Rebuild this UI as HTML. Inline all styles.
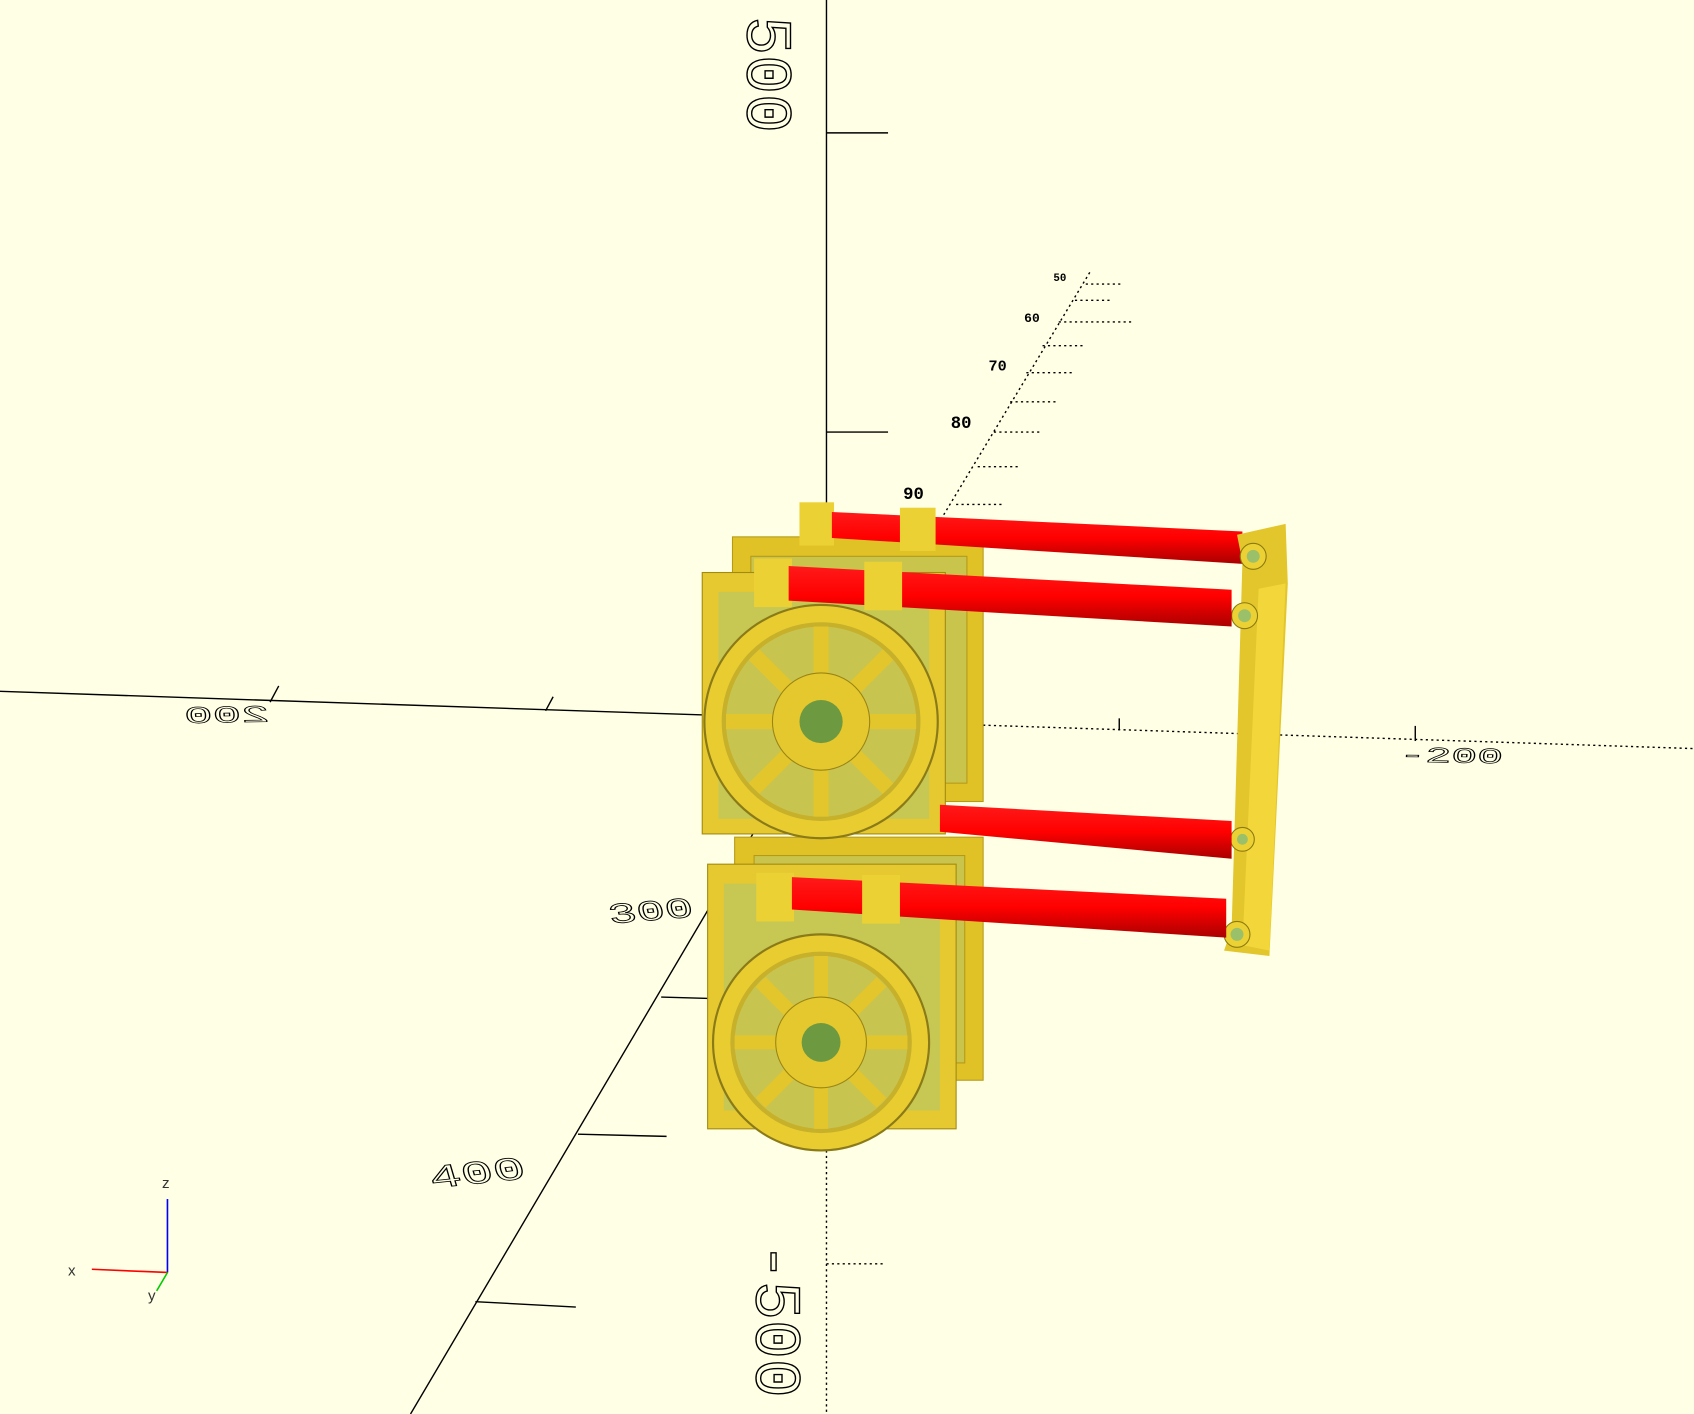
<!DOCTYPE html>
<html><head><meta charset="utf-8"><style>
html,body{margin:0;padding:0;background:#ffffe5;width:1694px;height:1414px;overflow:hidden}
svg{display:block}
</style></head><body>
<svg width="1694" height="1414" viewBox="0 0 1568 1309" preserveAspectRatio="none" xmlns="http://www.w3.org/2000/svg">
<defs>
<linearGradient id="rod" x1="0" y1="0" x2="0" y2="1">
<stop offset="0" stop-color="#ff1a1a"/><stop offset="0.5" stop-color="#f00"/><stop offset="1" stop-color="#a00"/>
</linearGradient>
</defs>
<rect width="1568" height="1309" fill="#ffffe5"/>
<g stroke="#000" fill="none" stroke-width="1.3">
<line x1="765" y1="0" x2="765" y2="525"/>
<line x1="765" y1="1060" x2="765" y2="1309" stroke-dasharray="2,3"/>
<line x1="0" y1="640" x2="655" y2="662"/>
<line x1="870" y1="670" x2="1568" y2="693" stroke-dasharray="2,3"/>
<line x1="380" y1="1309" x2="760" y2="665"/>
<line x1="760" y1="665" x2="1010" y2="250" stroke-dasharray="2,3"/>
<line x1="765" y1="123" x2="822" y2="123"/>
<line x1="765" y1="400" x2="822" y2="400"/>
<line x1="765" y1="1170" x2="820" y2="1170" stroke-dasharray="2,3"/>
<line x1="535" y1="1050" x2="617" y2="1052"/>
<line x1="440" y1="1205" x2="533" y2="1210"/>
<line x1="612" y1="923" x2="680" y2="925"/>
<line x1="885" y1="467" x2="928" y2="467" stroke-dasharray="2,3"/>
<line x1="905" y1="432" x2="945" y2="432" stroke-dasharray="2,3"/>
<line x1="920" y1="400" x2="963" y2="400" stroke-dasharray="2,3"/>
<line x1="935" y1="372" x2="978" y2="372" stroke-dasharray="2,3"/>
<line x1="950" y1="345" x2="992" y2="345" stroke-dasharray="2,3"/>
<line x1="965" y1="320" x2="1005" y2="320" stroke-dasharray="2,3"/>
<line x1="980" y1="298" x2="1050" y2="298" stroke-dasharray="2,3"/>
<line x1="995" y1="278" x2="1030" y2="278" stroke-dasharray="2,3"/>
<line x1="1005" y1="263" x2="1037" y2="263" stroke-dasharray="2,3"/>
<line x1="258" y1="635" x2="250" y2="650"/>
<line x1="512" y1="645" x2="505" y2="658"/>
<line x1="1036" y1="665" x2="1036" y2="676"/>
<line x1="1310" y1="672" x2="1310" y2="686"/>
</g>
<g font-family="Liberation Mono, monospace" fill="none" stroke="#000" stroke-width="1.3">
<text x="0" y="0" font-size="60" transform="translate(692,15) rotate(90)">500</text>
<text x="0" y="0" font-size="60" transform="translate(700,1150) rotate(90)">-500</text>
<text x="0" y="0" font-size="44" transform="translate(250,668) scale(-1,0.5) rotate(2)">200</text>
<text x="0" y="0" font-size="40" transform="translate(1295,705) scale(1,0.5) rotate(2)">-200</text>
<text x="0" y="0" font-size="44" transform="translate(565,855) scale(1,0.6) rotate(-8)">300</text>
<text x="0" y="0" font-size="50" transform="translate(400,1100) scale(1,0.6) rotate(-10)">400</text>
</g>
<g font-family="Liberation Mono, monospace" font-size="18" fill="#000" font-weight="bold">
<text x="836" y="462" font-size="16">90</text>
<text x="880" y="396" font-size="16">80</text>
<text x="915" y="343" font-size="14">70</text>
<text x="948" y="298" font-size="12">60</text>
<text x="975" y="260" font-size="10">50</text>
</g>
<g stroke="#b59a18" stroke-width="1">
<rect x="678" y="497" width="232" height="245" fill="#e0c227"/>
<rect x="695" y="515" width="200" height="210" fill="#c9c44c"/>
<rect x="680" y="775" width="230" height="225" fill="#e0c227"/>
<rect x="698" y="792" width="195" height="192" fill="#c9c44c"/>
</g>
<rect x="740" y="465" width="32" height="40" fill="#ecd135"/>
<polygon points="770,474 1150,492 1150,522 770,498" fill="url(#rod)"/>
<rect x="833" y="470" width="33" height="40" fill="#ecd135"/>
<polygon points="1145,495 1190,485 1192,540 1175,885 1133,880 1140,860 1150,520" fill="#e3c52c"/>
<polygon points="1165,545 1190,540 1175,880 1150,875" fill="#f2d63a"/>
<circle cx="1160" cy="515" r="12" fill="#ecd135" stroke="#8a7a10"/><circle cx="1160" cy="515" r="6" fill="#9bc06a"/>
<circle cx="1152" cy="570" r="12" fill="#ecd135" stroke="#8a7a10"/><circle cx="1152" cy="570" r="6" fill="#9bc06a"/>
<circle cx="1150" cy="777" r="11" fill="#ecd135" stroke="#8a7a10"/><circle cx="1150" cy="777" r="5" fill="#9bc06a"/>
<circle cx="1145" cy="865" r="12" fill="#ecd135" stroke="#8a7a10"/><circle cx="1145" cy="865" r="6" fill="#9bc06a"/>
<rect x="650" y="530" width="225" height="242" fill="#e6c830" stroke="#a08a10"/>
<rect x="665" y="548" width="195" height="210" fill="#c6c853"/>
<polygon points="870,745 1140,760 1140,795 870,770" fill="url(#rod)"/>
<rect x="698" y="517" width="35" height="45" fill="#ecd135"/>
<polygon points="730,524 1140,546 1140,580 730,556" fill="url(#rod)"/>
<rect x="800" y="520" width="35" height="45" fill="#ecd135"/>
<circle cx="760" cy="668" r="108" fill="#e8cc30" stroke="#8a7a18" stroke-width="2"/>
<circle cx="760" cy="668" r="92" fill="#c7b02a"/>
<circle cx="760" cy="668" r="88" fill="#c8c450"/>
<g stroke="#e3c52c" stroke-width="14">
<line x1="760" y1="580" x2="760" y2="756"/><line x1="672" y1="668" x2="848" y2="668"/>
<line x1="698" y1="606" x2="822" y2="730"/><line x1="822" y1="606" x2="698" y2="730"/>
</g>
<circle cx="760" cy="668" r="45" fill="#e5c82d" stroke="#9a8514"/>
<circle cx="760" cy="668" r="20" fill="#6d9a40"/>
<rect x="655" y="800" width="230" height="245" fill="#e6c830" stroke="#a08a10"/>
<rect x="670" y="818" width="200" height="210" fill="#c6c853"/>
<rect x="700" y="808" width="35" height="45" fill="#ecd135"/>
<polygon points="733,812 1135,832 1135,868 733,842" fill="url(#rod)"/>
<rect x="798" y="810" width="35" height="45" fill="#ecd135"/>
<circle cx="760" cy="965" r="100" fill="#e8cc30" stroke="#8a7a18" stroke-width="2"/>
<circle cx="760" cy="965" r="84" fill="#c7b02a"/>
<circle cx="760" cy="965" r="80" fill="#c8c450"/>
<g stroke="#e3c52c" stroke-width="13">
<line x1="760" y1="885" x2="760" y2="1045"/><line x1="680" y1="965" x2="840" y2="965"/>
<line x1="704" y1="909" x2="816" y2="1021"/><line x1="816" y1="909" x2="704" y2="1021"/>
</g>
<circle cx="760" cy="965" r="42" fill="#e5c82d" stroke="#9a8514"/>
<circle cx="760" cy="965" r="18" fill="#6d9a40"/>
<line x1="155" y1="1110" x2="155" y2="1178" stroke="#00f" stroke-width="1.5"/>
<line x1="85" y1="1175" x2="155" y2="1178" stroke="#f00" stroke-width="1.5"/>
<line x1="155" y1="1178" x2="145" y2="1195" stroke="#0c0" stroke-width="1.5"/>
<g font-family="Liberation Sans, sans-serif" font-size="14" fill="#333">
<text x="150" y="1100">z</text><text x="63" y="1181">x</text><text x="137" y="1204">y</text>
</g>
</svg>
</body></html>
